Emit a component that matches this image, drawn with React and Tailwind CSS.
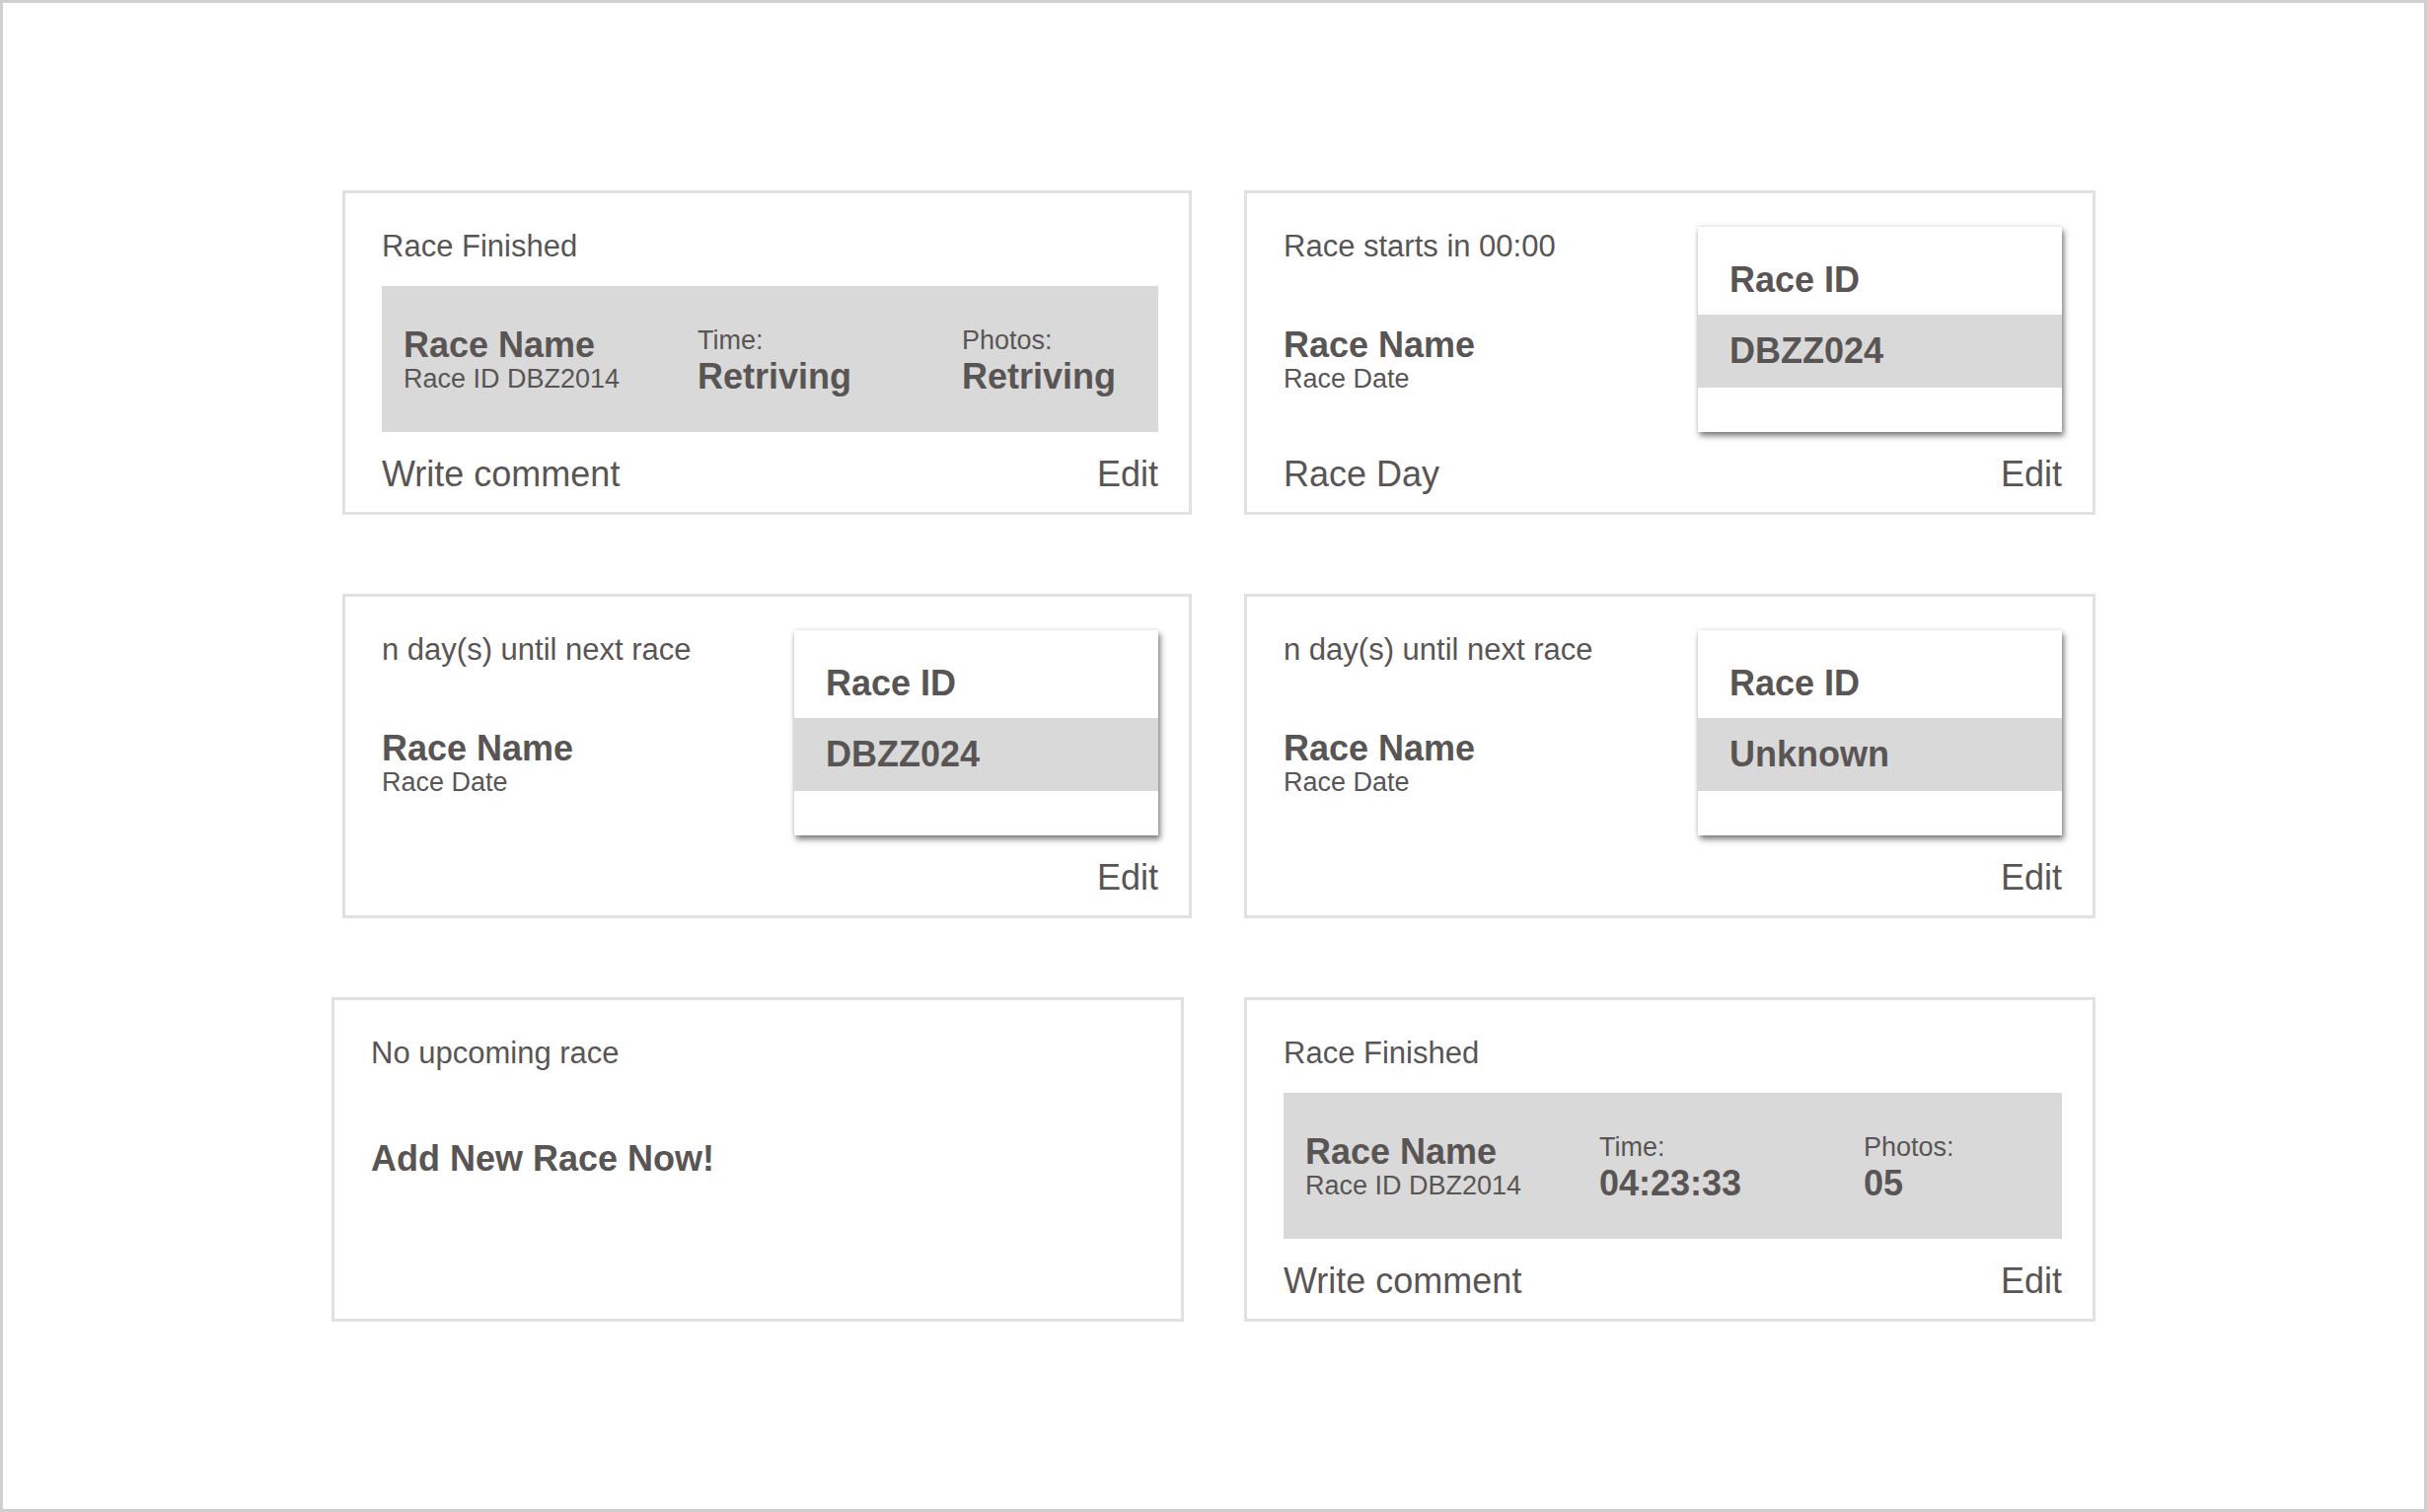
const ink = 'text-[#595555]';

function Card({ width, children }) {
  return (
    <div className={`flex h-[329px] ${width} flex-col border-[3px] border-[#e1e1e1] bg-white pl-[37px] pr-[31px]`}>
      {children}
    </div>
  );
}

function Footer({ left }) {
  return (
    <div className="mt-[25px] flex justify-between text-[36px] leading-none">
      <span>{left}</span>
      <span>Edit</span>
    </div>
  );
}

function FinishedCard({ width, time, photos }) {
  return (
    <Card width={width}>
      <div className="pt-[38px] text-[31px] leading-none">Race Finished</div>
      <div className="mt-[25px] flex h-[148px] bg-[#d9d9d9] pl-[22px] pt-[42px]">
        <div className="w-[298px]">
          <div className="text-[36px] font-bold leading-none">Race Name</div>
          <div className="mt-[3px] text-[27px] leading-none">Race ID DBZ2014</div>
        </div>
        <div className="w-[268px]">
          <div className="text-[27px] leading-none">Time:</div>
          <div className="mt-[5px] text-[36px] font-bold leading-none">{time}</div>
        </div>
        <div>
          <div className="text-[27px] leading-none">Photos:</div>
          <div className="mt-[5px] text-[36px] font-bold leading-none">{photos}</div>
        </div>
      </div>
      <Footer left="Write comment" />
    </Card>
  );
}

function RaceIdBox({ value }) {
  return (
    <div className="flex h-[208px] w-[369px] flex-col bg-white shadow-[2px_4px_6px_rgba(0,0,0,0.5),0_0_4px_rgba(0,0,0,0.12)]">
      <div className="h-[89px] pl-[32px] pt-[36px] text-[36px] font-bold leading-none">Race ID</div>
      <div className="flex h-[74px] items-center bg-[#d9d9d9] pl-[32px] text-[36px] font-bold leading-none">{value}</div>
    </div>
  );
}

function UpcomingCard({ width, label, value, footer }) {
  return (
    <Card width={width}>
      <div className="flex justify-between pt-[34px]">
        <div className="pt-[4px]">
          <div className="text-[31px] leading-none">{label}</div>
          <div className="mt-[67px] text-[36px] font-bold leading-none">Race Name</div>
          <div className="mt-[3px] text-[27px] leading-none">Race Date</div>
        </div>
        <RaceIdBox value={value} />
      </div>
      <Footer left={footer} />
    </Card>
  );
}

function EmptyCard({ width }) {
  return (
    <Card width={width}>
      <div className="pt-[38px] text-[31px] leading-none">No upcoming race</div>
      <div className="mt-[74px] text-[36px] font-bold leading-none">Add New Race Now!</div>
    </Card>
  );
}

export default function App() {
  return (
    <div className={`h-[1533px] w-[2460px] border-[3px] border-[#cfcfcf] bg-white ${ink} font-['Liberation_Sans',Arial,sans-serif]`}>
      <div className="flex flex-col gap-[80px] pt-[190px]">
        <div className="flex gap-[53px] pl-[344px]">
          <FinishedCard width="w-[861px]" time="Retriving" photos="Retriving" />
          <UpcomingCard width="w-[863px]" label="Race starts in 00:00" value="DBZZ024" footer="Race Day" />
        </div>
        <div className="flex gap-[53px] pl-[344px]">
          <UpcomingCard width="w-[861px]" label="n day(s) until next race" value="DBZZ024" footer="" />
          <UpcomingCard width="w-[863px]" label="n day(s) until next race" value="Unknown" footer="" />
        </div>
        <div className="flex gap-[61px] pl-[333px]">
          <EmptyCard width="w-[864px]" />
          <FinishedCard width="w-[863px]" time="04:23:33" photos="05" />
        </div>
      </div>
    </div>
  );
}
